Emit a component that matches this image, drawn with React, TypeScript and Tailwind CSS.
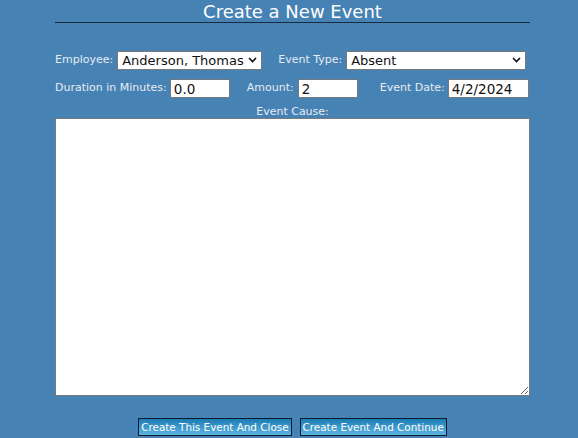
import { useState } from "react"

const labelCls = "text-[11px] text-[#e6ecf2] whitespace-nowrap"
const fieldCls =
  "h-[19px] border border-[#7a7a7a] bg-white px-[3px] text-[13.5px] leading-none text-[#111] outline-none"
const buttonCls =
  "h-[18px] border border-[#0d1b2a] bg-gradient-to-b from-[#1a7db5] to-[#5bb3df] px-[2px] text-[10.4px] leading-none text-white"

function Chevron() {
  return (
    <svg
      className="pointer-events-none absolute right-[5px] top-[6px]"
      width="9"
      height="6"
      viewBox="0 0 9 6"
    >
      <path d="M1 1 L4.5 4.5 L8 1" fill="none" stroke="#111" strokeWidth="1.6" />
    </svg>
  )
}

function Select({
  value,
  onChange,
  options,
  width,
}: {
  value: string
  onChange: (v: string) => void
  options: string[]
  width: string
}) {
  return (
    <div className={`relative ml-[4px] ${width}`}>
      <select
        value={value}
        onChange={(e) => onChange(e.target.value)}
        className={`${fieldCls} block w-full appearance-none pl-[4px] pr-[14px] !text-[13px]`}
      >
        {options.map((o) => (
          <option key={o}>{o}</option>
        ))}
      </select>
      <Chevron />
    </div>
  )
}

export default function App() {
  const [employee, setEmployee] = useState("Anderson, Thomas")
  const [eventType, setEventType] = useState("Absent")
  const [duration, setDuration] = useState("0.0")
  const [amount, setAmount] = useState("2")
  const [eventDate, setEventDate] = useState("4/2/2024")
  const [cause, setCause] = useState("")

  return (
    <div
      className="h-[438px] w-full overflow-hidden bg-[#4682b4]"
      style={{ fontFamily: "Tahoma, 'DejaVu Sans', Verdana, sans-serif" }}
    >
      <div className="ml-[55px] w-[475px]">
        <h1 className="h-[23px] border-b border-[#1a2b3f] pt-[2px] text-center text-[18px] leading-[20px] text-white">
          Create a New Event
        </h1>

        <div className="mt-[28px] flex items-center">
          <span className={labelCls}>Employee:</span>
          <Select
            value={employee}
            onChange={setEmployee}
            options={["Anderson, Thomas", "Baker, Susan"]}
            width="w-[145px]"
          />
          <span className={`${labelCls} ml-[16px]`}>Event Type:</span>
          <Select
            value={eventType}
            onChange={setEventType}
            options={["Absent", "Late", "Tardy"]}
            width="w-[180px]"
          />
        </div>

        <div className="mt-[9px] flex items-center">
          <span className={labelCls}>Duration in Minutes:</span>
          <input
            value={duration}
            onChange={(e) => setDuration(e.target.value)}
            className={`${fieldCls} ml-[3px] w-[60px]`}
          />
          <span className={`${labelCls} ml-[17px]`}>Amount:</span>
          <input
            value={amount}
            onChange={(e) => setAmount(e.target.value)}
            className={`${fieldCls} ml-[4px] w-[60px]`}
          />
          <span className={`${labelCls} ml-[22px]`}>Event Date:</span>
          <input
            value={eventDate}
            onChange={(e) => setEventDate(e.target.value)}
            className={`${fieldCls} ml-[3px] w-[81px]`}
          />
        </div>

        <div className={`${labelCls} mt-[7px] text-center leading-[13px]`}>Event Cause:</div>
        <textarea
          value={cause}
          onChange={(e) => setCause(e.target.value)}
          className="block h-[278px] w-[475px] border border-[#7a7a7a] bg-white outline-none"
        />

        <div className="mt-[22px] flex justify-center gap-[8px]">
          <button className={buttonCls}>Create This Event And Close</button>
          <button className={buttonCls}>Create Event And Continue</button>
        </div>
      </div>
    </div>
  )
}
